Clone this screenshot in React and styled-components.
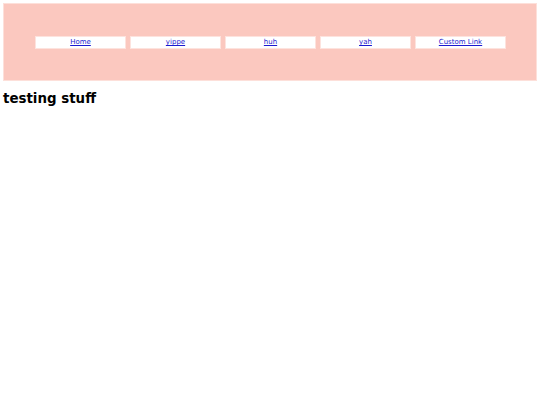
import React from "react";
import styled, { createGlobalStyle } from "styled-components";

const Global = createGlobalStyle`
  html, body { margin: 0; padding: 0; background: #fff; }
  body { padding: 3px; font-family: "DejaVu Sans", Verdana, sans-serif; }
`;

const Header = styled.header`
  box-sizing: border-box;
  width: 534px;
  height: 78px;
  background: #fbc8bf;
  border: 1px solid #fde0da;
  display: flex;
  align-items: center;
  padding-left: 31px;
`;

const Nav = styled.nav`
  display: flex;
  gap: 4px;
`;

const Item = styled.a`
  box-sizing: border-box;
  width: 91px;
  height: 13px;
  background: #fff;
  border: 1px solid #fde3de;
  display: flex;
  align-items: center;
  justify-content: center;
  font-size: 7px;
  color: #1a1ad0;
  text-decoration: underline;
`;

const Title = styled.h1`
  margin: 10px 0 0;
  font-size: 13.4px;
  line-height: 16px;
  font-weight: bold;
  color: #000;
`;

const links = ["Home", "yippe", "huh", "yah", "Custom Link"];

export default function App() {
  return (
    <>
      <Global />
      <Header>
        <Nav>
          {links.map((l) => (
            <Item key={l} href="#">{l}</Item>
          ))}
        </Nav>
      </Header>
      <Title>testing stuff</Title>
    </>
  );
}
